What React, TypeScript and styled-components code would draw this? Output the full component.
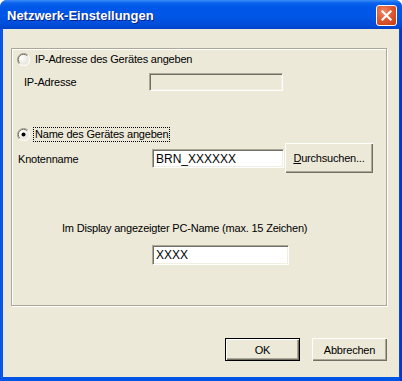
import * as React from 'react'
import styled, { createGlobalStyle } from 'styled-components'

const GlobalStyle = createGlobalStyle`
  html, body {
    margin: 0;
    padding: 0;
    background: #ffffff;
  }
  body {
    font-family: 'Liberation Sans', Arial, sans-serif;
    font-size: 11px;
    letter-spacing: -0.2px;
    color: #000000;
  }
`

const Window = styled.div`
  width: 402px;
  height: 381px;
  display: flex;
  flex-direction: column;
  background: linear-gradient(to right, #0831d9 0, #166aee 1px, #0055e5 2px, #0055e5 399px, #0042c8 400px, #0831d9 401px);
  border-radius: 7px 7px 0 0;
  overflow: hidden;
`

const TitleBar = styled.div`
  height: 29px;
  flex: none;
  display: flex;
  align-items: center;
  justify-content: space-between;
  padding: 0 5px 0 7px;
  background: linear-gradient(
    to bottom,
    #3d8ef8 0px,
    #0a62ec 3px,
    #0058e8 7px,
    #0055e5 18px,
    #004cd8 25px,
    #0042c8 29px
  );
`

const Title = styled.span`
  font-family: 'Liberation Sans', Arial, sans-serif;
  font-weight: bold;
  font-size: 13px;
  letter-spacing: 0;
  color: #ffffff;
  text-shadow: 1px 1px 0 #0a1e8a;
  margin-top: 1px;
`

const CloseButton = styled.div`
  width: 21px;
  height: 21px;
  box-sizing: border-box;
  border: 1px solid #ffffff;
  border-radius: 3px;
  background: radial-gradient(circle at 35% 30%, #ef8a68 0%, #e05a32 45%, #c53a12 100%);
  display: flex;
  align-items: center;
  justify-content: center;
  margin-top: 1px;
`

const Client = styled.div`
  flex: 1;
  margin: 0 3px 4px 3px;
  background: #ece9d8;
  padding: 19px 12px 0 8px;
  display: flex;
  flex-direction: column;
`

const GroupBox = styled.div`
  height: 258px;
  box-sizing: border-box;
  border: 1px solid #aca899;
  box-shadow: inset 1px 1px 0 #ffffff, 1px 1px 0 #ffffff;
  display: flex;
  flex-direction: column;
  padding: 1px;
`

const RadioRow = styled.div<{ $top: number }>`
  display: flex;
  align-items: center;
  height: 15px;
  margin-top: ${p => p.$top}px;
  padding-left: 4px;
`

const RadioLabel = styled.span<{ $focused?: boolean }>`
  margin-left: 4px;
  padding: 0 1px;
  line-height: 13px;
  outline: ${p => (p.$focused ? '1px dotted #000' : 'none')};
`

const FieldRow = styled.div<{ $top: number; $indent: number }>`
  display: flex;
  align-items: flex-start;
  margin-top: ${p => p.$top}px;
  padding-left: ${p => p.$indent}px;
`

const Label = styled.span<{ $width?: number; $offset?: number }>`
  width: ${p => (p.$width ? `${p.$width}px` : 'auto')};
  flex: none;
  line-height: 13px;
  margin-top: ${p => p.$offset ?? 0}px;
`

const TextBox = styled.div<{ $width: number; $height: number; $offset?: number; $disabled?: boolean }>`
  width: ${p => p.$width}px;
  height: ${p => p.$height}px;
  margin-top: ${p => p.$offset ?? 0}px;
  box-sizing: border-box;
  flex: none;
  background: ${p => (p.$disabled ? '#ece9d8' : '#ffffff')};
  border-top: 1px solid #aca899;
  border-left: 1px solid #aca899;
  border-right: 1px solid #ffffff;
  border-bottom: 1px solid #ffffff;
  box-shadow: inset 1px 1px 0 #716f64, inset -1px -1px 0 #f1efe2;
  padding: 0 0 0 3px;
  display: flex;
  align-items: center;
  font-size: 12px;
  letter-spacing: 0;
`

const Button = styled.div<{ $width: number; $height: number; $default?: boolean }>`
  width: ${p => p.$width}px;
  height: ${p => p.$height}px;
  margin-left: ${p => (p.$default ? 0 : 1)}px;
  box-sizing: border-box;
  flex: none;
  background: #ece9d8;
  border: ${p => (p.$default ? '1px solid #000000' : 'none')};
  box-shadow: inset 1px 1px 0 #ffffff, inset -1px -1px 0 #716f64, inset -2px -2px 0 #aca899;
  display: flex;
  align-items: center;
  justify-content: center;
  font-size: 11px;
`

const PcLabel = styled.div`
  margin-top: 49px;
  padding-left: 49px;
  line-height: 13px;
`

const PcField = styled.div`
  margin-top: 10px;
  padding-left: 139px;
`

const ButtonBar = styled.div`
  display: flex;
  justify-content: flex-end;
  align-items: flex-start;
  gap: 11px;
  margin-top: 32px;
`

const Radio: React.FC<{ checked?: boolean }> = ({ checked }) => (
  <svg width="13" height="13" viewBox="0 0 13 13">
    <defs>
      <radialGradient id={checked ? 'rg1' : 'rg0'} cx="0.35" cy="0.35" r="0.7">
        <stop offset="0" stopColor="#ffffff" />
        <stop offset="1" stopColor="#e4e2d8" />
      </radialGradient>
    </defs>
    <circle cx="6.5" cy="6.5" r="5.5" fill={`url(#${checked ? 'rg1' : 'rg0'})`} />
    <path d="M11 2.2 A6 6 0 0 0 2.2 11" fill="none" stroke="#aca899" strokeWidth="1" />
    <path d="M10.2 2.8 A5 5 0 0 0 2.8 10.2" fill="none" stroke="#716f64" strokeWidth="1" />
    <path d="M2.2 11 A6 6 0 0 0 11 2.2" fill="none" stroke="#ffffff" strokeWidth="1" />
    <path d="M2.8 10.2 A5 5 0 0 0 10.2 2.8" fill="none" stroke="#f1efe2" strokeWidth="1" />
    {checked && <circle cx="6.5" cy="6.5" r="2" fill="#000000" />}
  </svg>
)

const App: React.FC = () => (
  <>
    <GlobalStyle />
    <Window>
      <TitleBar>
        <Title>Netzwerk-Einstellungen</Title>
        <CloseButton>
          <svg width="11" height="11" viewBox="0 0 11 11">
            <path d="M1.5 1.5 L9.5 9.5 M9.5 1.5 L1.5 9.5" stroke="#ffffff" strokeWidth="2.2" strokeLinecap="square" />
          </svg>
        </CloseButton>
      </TitleBar>
      <Client>
        <GroupBox>
          <RadioRow $top={2}>
            <Radio />
            <RadioLabel>IP-Adresse des Gerätes angeben</RadioLabel>
          </RadioRow>
          <FieldRow $top={6} $indent={11}>
            <Label $width={125} $offset={3}>IP-Adresse</Label>
            <TextBox $width={134} $height={18} $disabled />
          </FieldRow>
          <RadioRow $top={36}>
            <Radio checked />
            <RadioLabel $focused>Name des Gerätes angeben</RadioLabel>
          </RadioRow>
          <FieldRow $top={1} $indent={5}>
            <Label $width={134} $offset={10}>Knotenname</Label>
            <TextBox $width={132} $height={19} $offset={6}>BRN_XXXXXX</TextBox>
            <Button $width={88} $height={30}>
              <u>D</u>urchsuchen...
            </Button>
          </FieldRow>
          <PcLabel>Im Display angezeigter PC-Name (max. 15 Zeichen)</PcLabel>
          <PcField>
            <TextBox $width={137} $height={20}>XXXX</TextBox>
          </PcField>
        </GroupBox>
        <ButtonBar>
          <Button $width={75} $height={23} $default>OK</Button>
          <Button $width={75} $height={23}>Abbrechen</Button>
        </ButtonBar>
      </Client>
    </Window>
  </>
)

export default App
